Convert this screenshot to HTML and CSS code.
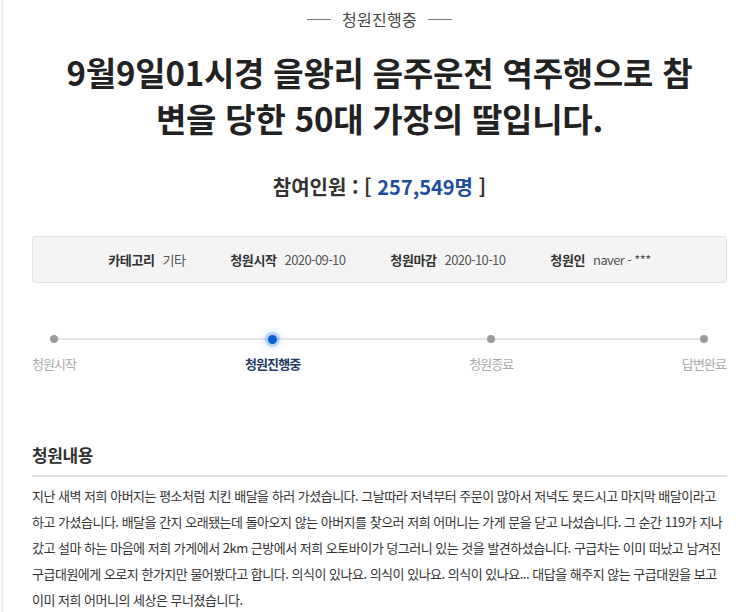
FILE: index.html
```html
<!DOCTYPE html>
<html lang="ko">
<head>
  <meta charset="UTF-8">
  <title>청원진행중</title>
  <link rel="stylesheet" href="styles.css">
</head>
<body>
  <div class="wrap">
    <div class="status"><span class="dash"></span>청원진행중<span class="dash"></span></div>

    <h1 class="title">9월9일01시경 을왕리 음주운전 역주행으로 참<br>변을 당한 50대 가장의 딸입니다.</h1>

    <p class="count">참여인원 : [ <span class="num">257,549명</span> ]</p>

    <ul class="info">
      <li><b>카테고리</b><span>기타</span></li>
      <li><b>청원시작</b><span>2020-09-10</span></li>
      <li><b>청원마감</b><span>2020-10-10</span></li>
      <li><b>청원인</b><span>naver - ***</span></li>
    </ul>

    <div class="steps">
      <div class="step s1"><i class="dot"></i><span>청원시작</span></div>
      <div class="step s2 on"><i class="dot"></i><span>청원진행중</span></div>
      <div class="step s3"><i class="dot"></i><span>청원종료</span></div>
      <div class="step s4"><i class="dot"></i><span>답변완료</span></div>
    </div>

    <h2 class="sub">청원내용</h2>
    <div class="body">
      지난 새벽 저희 아버지는 평소처럼 치킨 배달을 하러 가셨습니다. 그날따라 저녁부터 주문이 많아서 저녁도 못드시고 마지막 배달이라고 하고 가셨습니다. 배달을 간지 오래됐는데 돌아오지 않는 아버지를 찾으러 저희 어머니는 가게 문을 닫고 나섰습니다. 그 순간 119가 지나갔고 설마 하는 마음에 저희 가게에서 2km 근방에서 저희 오토바이가 덩그러니 있는 것을 발견하셨습니다. 구급차는 이미 떠났고 남겨진 구급대원에게 오로지 한가지만 물어봤다고 합니다. 의식이 있나요. 의식이 있나요. 의식이 있나요... 대답을 해주지 않는 구급대원을 보고 이미 저희 어머니의 세상은 무너졌습니다.
    </div>
  </div>
</body>
</html>
```

FILE: styles.css
```css
body { margin: 0; background: #fff; font-family: "Noto Sans CJK KR", "Noto Sans", sans-serif; color: #333; }
.wrap { margin-left: 1px; border-left: 2px solid #ececec; padding: 7px 23px 0 29px; min-height: 612px; box-sizing: border-box; }

.status { display: flex; justify-content: center; align-items: center; gap: 11px; font-size: 16px; line-height: 24px; color: #444; letter-spacing: 0.3px; }
.dash { width: 24px; height: 1px; background: #777; }

.title { margin: 18px 0 0; text-align: center; font-size: 33px; line-height: 46px; font-weight: 700; color: #222; letter-spacing: -0.2px; }

.count { margin: 31px 0 0; text-align: center; font-size: 20px; line-height: 30px; font-weight: 700; color: #333; letter-spacing: 0; }
.count .num { color: #1d4f9e; }

.info { list-style: none; margin: 34px 0 0; padding: 0; height: 45px; display: flex; justify-content: center; align-items: center; gap: 45px; background: #f4f4f4; border: 1px solid #e2e2e2; border-radius: 3px; font-size: 13px; }
.info b { font-weight: 700; color: #333; letter-spacing: -0.4px; }
.info span { margin-left: 8px; color: #555; letter-spacing: -0.6px; }

.steps { position: relative; margin-top: 46px; display: flex; justify-content: space-between; }
.steps::before { content: ""; position: absolute; left: 21px; right: 24px; top: 9px; height: 2px; background: #e4e4e4; }
.step { display: flex; flex-direction: column; align-items: center; width: 44px; }
.step.s2 { width: 58px; }
.step.s4 { width: 46px; }
.dot { position: relative; width: 8px; height: 8px; margin: 6px 0; border-radius: 50%; background: #9a9a9a; }
.step.on .dot { width: 9px; height: 9px; margin: 5.5px 0; background: #0b5fd0; box-shadow: 0 0 0 3px rgba(60, 130, 230, 0.25), 0 0 6px 4px rgba(60, 130, 230, 0.2); }
.step span { margin-top: 5px; font-size: 13px; line-height: 20px; white-space: nowrap; color: #aaa; letter-spacing: -0.9px; }
.step.on span { color: #1f3a63; font-weight: 700; }

.sub { margin: 69px 0 0; padding-bottom: 8px; border-bottom: 2px solid #e2e2e2; font-size: 17px; line-height: 24px; font-weight: 700; color: #333; letter-spacing: -0.4px; }

.body { margin-top: 6px; font-size: 13px; line-height: 26px; color: #333; letter-spacing: -0.5px; }
```
